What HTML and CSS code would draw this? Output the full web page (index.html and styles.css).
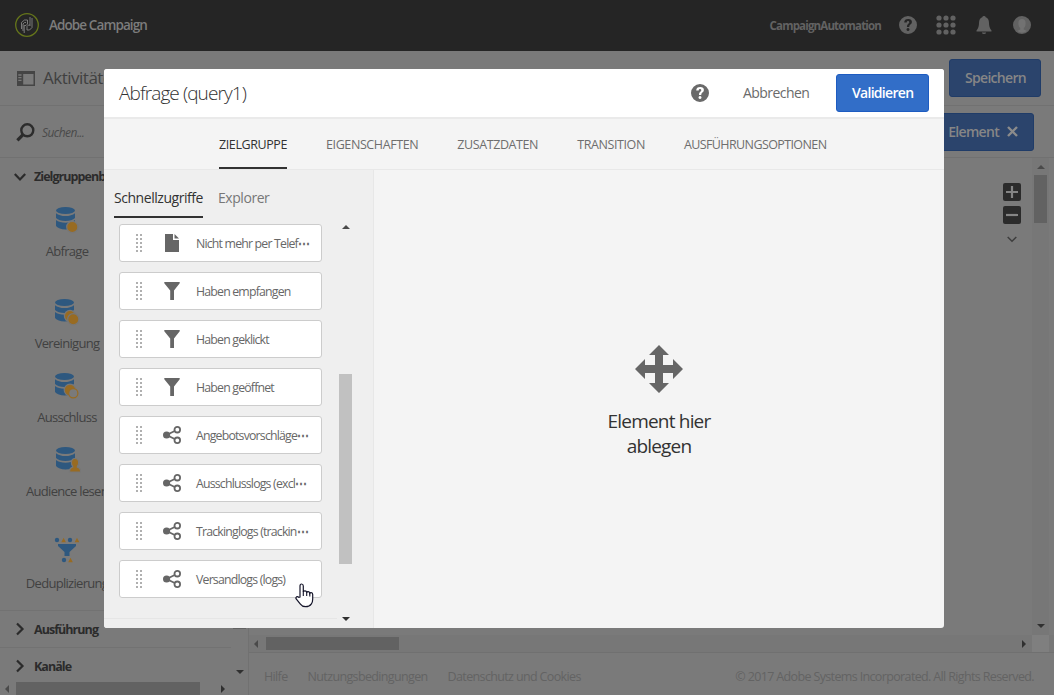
FILE: index.html
```html
<!DOCTYPE html>
<html lang="de">

<head>
    <meta charset="UTF-8" />
    <meta name="viewport" content="width=device-width, initial-scale=1" />
    <title>Adobe Campaign</title>
    <link rel="stylesheet" href="styles.css">
</head>

<body>
    <!-- shared icons -->
    <svg class="defs" width="0" height="0">
        <symbol id="help" viewBox="0 0 18 18">
            <path fill-rule="evenodd" d="M9 0a9 9 0 1 1 0 18A9 9 0 0 1 9 0zM5.200 6.400h2.500Q7.700 5 9 5t1.300 1.200q0 .8-1 1.500Q7.900 8.800 7.900 11h2.300q0-1.500 1.200-2.400 1.500-1.100 1.500-2.700Q12.900 3 9.200 3 5.300 3 5.200 6.400zM9 12.100a1.500 1.500 0 1 0 .01 0z" />
        </symbol>
        <symbol id="db" viewBox="0 0 28 28">
            <ellipse cx="12.500" cy="3.500" rx="9.500" ry="3.500" />
            <path d="M3 6.300q3.500 2.800 9.500 2.800t9.500-2.800v4.700q-3 3-9.500 3t-9.500-3z" />
            <path d="M3 13q3.500 2.800 9.500 2.800t9.500-2.800v6q-3 3.400-9.500 3.400t-9.500-3.400z" />
        </symbol>
        <symbol id="grip" viewBox="0 0 8 18">
            <path d="M2 0v18M6 0v18" stroke="#b0b0b0" stroke-width="2" stroke-dasharray="2 2" />
        </symbol>
        <symbol id="file" viewBox="0 0 18 18">
            <path d="M2 0h8v6h6v12H2z" />
            <path d="M11.500 0v4.500H16z" />
        </symbol>
        <symbol id="filter" viewBox="0 0 18 18">
            <path d="M1.300 0h15.400v1.200L11 8.500V18H7.200V8.500L1.300 1.200z" />
        </symbol>
        <symbol id="share" viewBox="0 0 18 18">
            <path d="M3.500 9l10.300-5M3.500 9l10.300 5" fill="none" stroke="currentColor" stroke-width="1.800" />
            <circle cx="3.600" cy="9" r="3.600" />
            <circle cx="14.300" cy="3.700" r="2.800" fill="#fff" stroke="currentColor" stroke-width="1.800" />
            <circle cx="14.300" cy="14.300" r="2.800" fill="#fff" stroke="currentColor" stroke-width="1.800" />
        </symbol>
    </svg>

    <header class="topbar">
        <svg class="logo" width="24" height="24" viewBox="0 0 24 24" fill="none">
            <circle cx="12" cy="12" r="11.300" stroke="#65751b" stroke-width="1.300" />
            <path d="M6.500 16V9.500l3-2.500h3v4l-1.500 1.500H9.200V20M8 18v-7l1.500-1.500H11M17 5v9.500L14.500 17H12v-3.500l1.500-1.500H15M15 4v9" stroke="#858585" stroke-width=".9" />
        </svg>
        <span class="brand">Adobe Campaign</span>
        <span class="account">CampaignAutomation</span>
        <svg class="top-help" width="18" height="18"><use href="#help" /></svg>
        <svg class="top-apps" width="20" height="20" fill="#626262">
            <circle cx="3" cy="3" r="2.600" /><circle cx="10" cy="3" r="2.600" /><circle cx="17" cy="3" r="2.600" />
            <circle cx="3" cy="10" r="2.600" /><circle cx="10" cy="10" r="2.600" /><circle cx="17" cy="10" r="2.600" />
            <circle cx="3" cy="17" r="2.600" /><circle cx="10" cy="17" r="2.600" /><circle cx="17" cy="17" r="2.600" />
        </svg>
        <svg class="top-bell" width="16" height="18" fill="#626262">
            <path d="M8 0q1.500 0 1.700 1.300Q13 2.500 13 7q0 5 2.500 7.500v1H.5v-1Q3 12 3 7q0-4.500 3.300-5.700Q6.500 0 8 0zM5.800 16.400h4.400Q9.800 18 8 18t-2.200-1.600z" />
        </svg>
        <svg class="top-user" width="18" height="18">
            <circle cx="9" cy="9" r="9" fill="#626262" />
            <path d="M9 3q3.600 0 3.600 4T10.800 12v1.500l3 1.500q-4.800 3.500-9.600 0l3-1.500V12Q5.400 11 5.400 7T9 3z" fill="#727272" />
        </svg>
    </header>

    <div class="titlebar">
        <svg width="18" height="15" viewBox="0 0 18 15">
            <path d="M0 0h18v15H0zM6.200 3v10.500h10.300V3z" fill="#454545" fill-rule="evenodd" />
            <path d="M1.300 4h3.200M1.300 6.700h3.200M1.300 9.400h3.200" stroke="#7a7a7a" stroke-width="1.300" />
        </svg>
        <span class="page-title">Aktivitäten</span>
        <button class="btn btn-dim save">Speichern</button>
    </div>

    <div class="toolbar">
        <svg width="19" height="19" viewBox="0 0 19 19" fill="none" stroke="#2c2c2c">
            <circle cx="11.300" cy="7.300" r="6" stroke-width="2.400" />
            <path d="M7 11.700L1.400 17.400" stroke-width="3.200" />
        </svg>
        <span class="search">Suchen...</span>
        <button class="btn btn-dim element">1 Element
            <svg width="11" height="11" viewBox="0 0 11 11"><path d="M1 1l9 9M10 1l-9 9" stroke="#8b8b8b" stroke-width="2.400" /></svg>
        </button>
    </div>

    <div class="workspace">
        <aside class="sidebar">
            <div class="side-list">
                <div class="group">
                    <svg width="12" height="12" viewBox="0 0 12 12"><path d="M.8 3L6 8.500 11.200 3" /></svg>Zielgruppenbestimmung
                </div>
                <div class="activity">
                    <svg width="28" height="28"><use href="#db" /><circle class="orange" cx="19.300" cy="20" r="5.600" /></svg>
                    <span>Abfrage</span>
                </div>
                <div class="activity spaced">
                    <svg width="28" height="28"><use href="#db" x="-1" /><circle class="orange" cx="17" cy="17" r="5.600" /><circle class="orange" cx="20.300" cy="20.200" r="5.600" /></svg>
                    <span>Vereinigung</span>
                </div>
                <div class="activity">
                    <svg width="28" height="28"><use href="#db" x="-1" /><circle class="orange" cx="17" cy="17" r="5.800" /><circle class="hollow" cx="20.300" cy="20.300" r="4.600" /></svg>
                    <span>Ausschluss</span>
                </div>
                <div class="activity">
                    <svg width="28" height="28"><use href="#db" /><path class="orange" d="M22 11.500q3.700 0 3.700 4.200 0 2.300-1.300 3.500v1q3.300.8 3.300 4.800H16.500q0-4 3.200-4.800v-1q-1.300-1.200-1.300-3.500 0-4.200 3.600-4.200z" /></svg>
                    <span>Audience lesen</span>
                </div>
                <div class="activity spaced-sm">
                    <svg width="28" height="28">
                        <g class="blue"><circle cx="4" cy="4" r="2.200" /><circle cx="17" cy="4" r="2.200" /><circle cx="11" cy="24" r="2.200" />
                            <path d="M5 8h18v2l-6.500 6v4h-5v-4L5 10z" /></g>
                        <path class="amber" d="M8.300 6.200l2.300-4.400 2.300 4.400zM21.700 6.200L24 1.800l2.300 4.400zM15.200 26.200l2.300-4.400 2.300 4.400z" />
                    </svg>
                    <span>Deduplizierung</span>
                </div>
                <div class="group closed">
                    <svg width="12" height="14" viewBox="0 0 12 14"><path d="M3 1.500L8.500 7 3 12.500" /></svg>Ausführung
                </div>
                <div class="group closed">
                    <svg width="12" height="14" viewBox="0 0 12 14"><path d="M3 1.500L8.500 7 3 12.500" /></svg>Kanäle
                </div>
            </div>
            <div class="vbar side-vbar"><i class="thumb"></i><i class="arrow down"></i></div>
            <div class="hbar side-hbar"><i class="arrow left"></i><i class="thumb"></i><i class="arrow right"></i></div>
        </aside>

        <main class="main">
            <div class="canvas">
                <div class="zoom-tools">
                    <svg width="18" height="18"><rect width="18" height="18" rx="2" fill="#2b2b2b" /><path d="M9 3v12M3 9h12" stroke="#858585" stroke-width="2.200" /></svg>
                    <svg width="18" height="18"><rect width="18" height="18" rx="2" fill="#2b2b2b" /><path d="M3 9h12" stroke="#858585" stroke-width="2.200" /></svg>
                    <svg width="10" height="7"><path d="M.7 1L5 5.300 9.300 1" fill="none" stroke="#3e3e3e" stroke-width="1.500" /></svg>
                </div>
                <div class="vbar main-vbar"><i class="arrow up"></i><i class="thumb"></i><i class="arrow down"></i></div>
            </div>
            <div class="hbar main-hbar"><i class="arrow left"></i><i class="thumb"></i><i class="arrow right"></i><i class="corner"></i></div>
            <footer class="footer">
                <span>Hilfe</span><span>Nutzungsbedingungen</span><span>Datenschutz und Cookies</span>
                <span class="copyright">© 2017 Adobe Systems Incorporated. All Rights Reserved.</span>
            </footer>
        </main>
    </div>

    <section class="dialog">
        <div class="dialog-head">
            <h1>Abfrage (query1)</h1>
            <svg class="dialog-help" width="18" height="18"><use href="#help" /></svg>
            <span class="cancel">Abbrechen</span>
            <button class="btn validate">Validieren</button>
        </div>
        <nav class="tabs">
            <span class="tab active">ZIELGRUPPE</span>
            <span class="tab">EIGENSCHAFTEN</span>
            <span class="tab">ZUSATZDATEN</span>
            <span class="tab">TRANSITION</span>
            <span class="tab">AUSFÜHRUNGSOPTIONEN</span>
        </nav>
        <div class="dialog-body">
            <div class="palette">
                <div class="subtabs">
                    <span class="subtab active">Schnellzugriffe</span>
                    <span class="subtab">Explorer</span>
                </div>
                <div class="palette-scroll">
                    <div class="cards">
                        <div class="card"><svg width="8" height="18"><use href="#grip" /></svg><svg class="kind" width="18" height="18"><use href="#file" /></svg><span>Nicht mehr per Telef<b>⋯</b></span></div>
                        <div class="card"><svg width="8" height="18"><use href="#grip" /></svg><svg class="kind" width="18" height="18"><use href="#filter" /></svg><span>Haben empfangen</span></div>
                        <div class="card"><svg width="8" height="18"><use href="#grip" /></svg><svg class="kind" width="18" height="18"><use href="#filter" /></svg><span>Haben geklickt</span></div>
                        <div class="card"><svg width="8" height="18"><use href="#grip" /></svg><svg class="kind" width="18" height="18"><use href="#filter" /></svg><span>Haben geöffnet</span></div>
                        <div class="card"><svg width="8" height="18"><use href="#grip" /></svg><svg class="kind" width="18" height="18"><use href="#share" /></svg><span>Angebotsvorschläge<b>⋯</b></span></div>
                        <div class="card"><svg width="8" height="18"><use href="#grip" /></svg><svg class="kind" width="18" height="18"><use href="#share" /></svg><span>Ausschlusslogs (excl<b>⋯</b></span></div>
                        <div class="card"><svg width="8" height="18"><use href="#grip" /></svg><svg class="kind" width="18" height="18"><use href="#share" /></svg><span>Trackinglogs (trackin<b>⋯</b></span></div>
                        <div class="card"><svg width="8" height="18"><use href="#grip" /></svg><svg class="kind" width="18" height="18"><use href="#share" /></svg><span>Versandlogs (logs)</span></div>
                    </div>
                    <div class="vbar light"><i class="arrow up"></i><i class="thumb"></i><i class="arrow down"></i></div>
                </div>
            </div>
            <div class="dropzone">
                <svg width="48" height="48" fill="#666">
                    <path d="M24 0l10 10h-6v10h10v-6l10 10-10 10v-6H28v10h6L24 48 14 38h6V28H10v6L0 24l10-10v6h10V10h-6z" />
                </svg>
                <p>Element hier<br>ablegen</p>
            </div>
        </div>
    </section>

    <svg class="cursor" width="19" height="25" viewBox="0 0 19 25">
        <path d="M5 14V3q0-2 1.600-2T8.300 3v6q.2-1.300 1.700-1.200T11.700 9.500q.3-1 1.500-.9t1.600 1.700q.3-.7 1.400-.6 1.500.2 1.500 1.800V16q0 3-1.300 4.800-2 2.900-5.800 2.900-3.500 0-5.200-2.500L1.200 16q-.8-1.400.3-2.100 1.300-.7 2.300.4z" fill="#fff" stroke="#15152a" stroke-width="1.200" />
        <path d="M8.300 8.500V13M11.700 9v4M14.800 10v3.500" stroke="#15152a" stroke-width="1.100" />
    </svg>
</body>

</html>
```
FILE: styles.css
```css
* {
    box-sizing: border-box;
}

body {
    margin: 0;
    width: 1054px;
    height: 695px;
    overflow: hidden;
    position: relative;
    background: #7a7a7a;
    font-family: "Open Sans", "Noto Sans", sans-serif;
    font-size: 13px;
    color: #4b4b4b;
    white-space: nowrap;
}

svg {
    display: block;
    flex: none;
}

.defs {
    position: absolute;
}

.topbar {
    height: 51px;
    background: #252525;
    color: #7c7c7c;
    display: flex;
    align-items: center;
    padding: 0 23px 1px 15px;
}

.brand {
    margin-left: 10px;
    font-size: 13.5px;
    font-weight: 600;
    letter-spacing: -0.9px;
}

.account {
    margin-left: auto;
    color: #626262;
    font-size: 11.5px;
    font-weight: 700;
    letter-spacing: -0.83px;
}

.top-help {
    margin-left: 18px;
    fill: #626262;
}

.top-apps {
    margin-left: 19px;
}

.top-bell {
    margin-left: 20px;
}

.top-user {
    margin-left: 21px;
}

.titlebar {
    height: 55px;
    border-bottom: 1px solid #717171;
    display: flex;
    align-items: center;
    padding: 0 13px 0 17px;
}

.page-title {
    margin-left: 8px;
    padding-bottom: 2px;
    font-size: 17px;
    letter-spacing: -0.5px;
    color: #404040;
}

.btn {
    height: 38px;
    border: 1px solid #1e5cc1;
    border-radius: 3px;
    background: #326ec8;
    color: #fff;
    font: inherit;
    font-size: 14px;
    font-weight: 600;
    letter-spacing: -0.7px;
    padding: 0 15px 2px;
}

.btn-dim {
    background: #2b446c;
    border-color: #203c68;
    color: #868686;
}

.save {
    width: 92px;
    margin-left: auto;
}

.toolbar {
    height: 52px;
    border-bottom: 1px solid #717171;
    display: flex;
    align-items: center;
    padding: 1px 20px 0 16px;
}

.search {
    margin-left: 7px;
    font-size: 12px;
    font-style: italic;
    letter-spacing: -0.55px;
    color: #4a4a4a;
}

.element {
    margin-left: auto;
    display: flex;
    align-items: center;
    gap: 8px;
}

.workspace {
    height: 537px;
    display: flex;
}

.sidebar {
    width: 249px;
    display: grid;
    grid-template: 524px 13px / 231px 17px;
    border-right: 1px solid #717171;
    overflow: hidden;
}

.side-list {
    overflow: hidden;
}

.group {
    height: 40px;
    display: flex;
    align-items: center;
    gap: 8px;
    padding: 0 0 3px 14px;
    font-size: 12.5px;
    font-weight: 700;
    letter-spacing: -0.95px;
    color: #2b2b2b;
}

.group svg {
    fill: none;
    stroke: #2b2b2b;
    stroke-width: 2.2;
}

.group.closed {
    height: 37px;
    padding-bottom: 0;
    border-top: 1px solid #727272;
}

.activity {
    height: 74px;
    width: 134px;
    padding-top: 9px;
    display: flex;
    flex-direction: column;
    align-items: center;
    gap: 6px;
    line-height: 20px;
    letter-spacing: -0.7px;
    color: #414141;
}

.spaced {
    margin-top: 18px;
}

.spaced-sm {
    margin: 16px 0 8px;
    padding-top: 8px;
    gap: 9px;
}

.activity use,
.blue {
    fill: #2e587f;
}

.amber {
    fill: #986b22;
}

.orange {
    fill: #986b22;
    stroke: #777;
    stroke-width: 1.2;
}

.hollow {
    fill: #7a7a7a;
    stroke: #986b22;
    stroke-width: 1.2;
}

/* scrollbars */
.vbar,
.hbar {
    display: flex;
    align-items: center;
}

.vbar {
    flex-direction: column;
    width: 17px;
}

.hbar {
    height: 17px;
}

.thumb {
    background: #626262;
}

.vbar .thumb {
    width: 13px;
}

.hbar .thumb {
    height: 13px;
}

.arrow {
    width: 0;
    height: 0;
    border: 4px solid transparent;
}

.arrow.up {
    border-top: 0;
    border-bottom-color: #4a4a4a;
}

.arrow.down {
    border-bottom: 0;
    border-top-color: #303030;
    margin-top: auto;
}

.arrow.left {
    border-left: 0;
    border-right-color: #4a4a4a;
}

.arrow.right {
    border-right: 0;
    border-left-color: #303030;
    margin-left: auto;
}

.side-vbar {
    padding-bottom: 8px;
}

.side-vbar .thumb {
    height: 471px;
}

.side-hbar {
    height: 13px;
    padding: 0 6px 0 5px;
}

.side-hbar .thumb {
    margin-left: 7px;
    width: 184px;
}

.main {
    flex: 1;
    display: flex;
    flex-direction: column;
}

.canvas {
    height: 477px;
    display: flex;
    justify-content: flex-end;
}

.zoom-tools {
    display: flex;
    flex-direction: column;
    align-items: center;
    gap: 5px;
    padding: 25px 11px 0 0;
}

.zoom-tools svg:last-child {
    margin-top: 7px;
}

.main-vbar {
    margin-right: 5px;
    padding: 7px 0 7px;
    background: #777;
}

.main-vbar .thumb {
    margin-top: 6px;
    height: 48px;
}

.main-hbar {
    height: 18px;
    padding: 0 5px 0 5px;
    border-bottom: 1px solid #707070;
    background: #777;
}

.main-hbar .thumb {
    margin-left: 8px;
    width: 133px;
}

.corner {
    width: 17px;
    height: 17px;
    margin-left: 6px;
    background: #7f7f7f;
}

.footer {
    flex: 1;
    display: flex;
    align-items: center;
    gap: 20px;
    padding: 5px 20px 0 15px;
    font-size: 12.5px;
    letter-spacing: -0.64px;
    color: #636363;
}

.copyright {
    margin-left: auto;
}

/* dialog */
.dialog {
    position: absolute;
    left: 104px;
    top: 69px;
    width: 840px;
    height: 559px;
    border-radius: 3px;
    overflow: hidden;
    background: #f4f4f4;
    display: flex;
    flex-direction: column;
}

.dialog-head {
    height: 50px;
    background: #fff;
    border-bottom: 2px solid #eaeaea;
    display: flex;
    align-items: center;
    padding: 0 15px;
}

.dialog-head h1 {
    margin: 0;
    font-size: 19px;
    font-weight: 300;
    letter-spacing: -0.9px;
    color: #323232;
}

.dialog-help {
    margin-left: auto;
    fill: #6a6a6a;
}

.cancel {
    width: 67px;
    margin: 0 26px 2px 34px;
    font-size: 14px;
    letter-spacing: -0.55px;
    color: #6a6a6a;
}

.validate {
    width: 93px;
}

.tabs {
    height: 51px;
    padding-left: 115px;
    border-bottom: 1px solid #e8e8e8;
    display: flex;
    gap: 39px;
    line-height: 51px;
    font-size: 12.5px;
    letter-spacing: -0.4px;
    color: #6e6e6e;
}

.tab {
    height: 50px;
}

.tab:last-child {
    letter-spacing: -0.6px;
}

.tab.active,
.subtab.active {
    color: #323232;
    border-bottom: 2px solid #323232;
}

.dialog-body {
    flex: 1;
    display: flex;
    min-height: 0;
}

.palette {
    width: 270px;
    background: #efefef;
    border-right: 1px solid #e7e7e7;
}

.subtabs {
    height: 48px;
    padding-left: 10px;
    display: flex;
    gap: 15px;
    line-height: 56px;
    font-size: 14px;
    letter-spacing: -0.45px;
    color: #777;
}

.palette-scroll {
    height: 411px;
    display: flex;
}

.cards {
    width: 233px;
    height: 401px;
    padding: 6px 15px 0;
    border-bottom: 1px solid #e6e6e6;
    display: flex;
    flex-direction: column;
    gap: 10px;
}

.card {
    width: 203px;
    height: 38px;
    flex: none;
    background: #fff;
    border: 1px solid #ccc;
    border-radius: 3px;
    display: flex;
    align-items: center;
    padding-left: 15px;
    font-size: 12.3px;
    letter-spacing: -0.8px;
    color: #676767;
}

.card b {
    font-weight: 700;
}

.kind {
    margin: 0 15px 0 20px;
    fill: #666;
    color: #666;
}

.light {
    padding: 7px 0 8px;
}

.light .thumb {
    margin-top: 145px;
    height: 190px;
    background: #c1c1c1;
}

.dropzone {
    flex: 1;
    padding-top: 175px;
    display: flex;
    flex-direction: column;
    align-items: center;
}

.dropzone p {
    margin: 16px 0 0;
    text-align: center;
    font-size: 19px;
    line-height: 25px;
    letter-spacing: -0.8px;
    color: #323232;
}

.cursor {
    position: absolute;
    left: 295px;
    top: 583px;
}
```
